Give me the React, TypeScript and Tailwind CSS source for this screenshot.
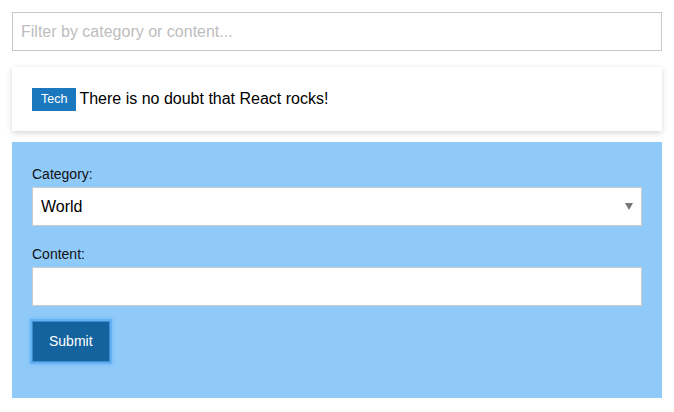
import { useState } from "react";

const font = { fontFamily: '"Liberation Sans", Arial, Helvetica, sans-serif' };

const fieldClass =
  "block h-[39px] w-full border border-[#cccccc] bg-white px-2 text-[16px] text-black outline-none";

export default function App() {
  const [filter, setFilter] = useState("");
  const [category, setCategory] = useState("World");
  const [content, setContent] = useState("");

  return (
    <div className="min-h-screen bg-white p-3" style={font}>
      <input
        value={filter}
        onChange={(e) => setFilter(e.target.value)}
        placeholder="Filter by category or content..."
        className="block h-[39px] w-full border border-[#c8c8c8] bg-white px-2 text-[16px] text-black outline-none placeholder:text-[#bdbdbd]"
      />

      <div className="mt-4 flex h-16 items-center gap-[3px] bg-white px-5 shadow-[0_2px_6px_rgba(0,0,0,0.16)]">
        <span className="flex h-[23px] items-center bg-[#1b78bf] px-[9px] text-[12.5px] text-white">
          Tech
        </span>
        <span className="text-[16px] text-black">There is no doubt that React rocks!</span>
      </div>

      <form
        className="mt-[11px] bg-[#90caf9] px-5 pb-9 pt-6"
        onSubmit={(e) => e.preventDefault()}
      >
        <label className="mb-[5px] block text-[14px] leading-4 text-[#111]">Category:</label>
        <div className="relative mb-5">
          <select
            value={category}
            onChange={(e) => setCategory(e.target.value)}
            className={`${fieldClass} appearance-none rounded-none`}
          >
            <option>World</option>
            <option>Tech</option>
            <option>Sports</option>
          </select>
          <span className="pointer-events-none absolute right-[9px] top-[16px] h-0 w-0 border-x-[4px] border-t-[7px] border-x-transparent border-t-[#777]" />
        </div>

        <label className="mb-[5px] block text-[14px] leading-4 text-[#111]">Content:</label>
        <input
          value={content}
          onChange={(e) => setContent(e.target.value)}
          className={fieldClass}
        />

        <button
          type="submit"
          className="mt-[15px] h-[41px] border border-[#3f8ccc] bg-[#15639e] px-4 text-[14px] text-white shadow-[0_0_0_2px_#62b1f6,0_0_3px_3px_rgba(98,177,246,0.5)]"
        >
          Submit
        </button>
      </form>
    </div>
  );
}
